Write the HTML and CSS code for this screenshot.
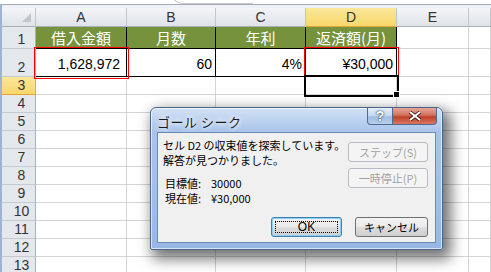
FILE: index.html
```html
<!DOCTYPE html>
<html lang="ja">
<head>
    <meta charset="UTF-8">
    <title>ゴール シーク</title>
    <link rel="stylesheet" href="styles.css">
</head>
<body>

<div class="topbar"><div class="formula-tab"></div></div>

<!-- シート -->
<div class="sheet">
    <div class="h corner"></div>
    <div class="h">A</div>
    <div class="h">B</div>
    <div class="h">C</div>
    <div class="h sel">D</div>
    <div class="h">E</div>
    <div class="h"></div>

    <div class="rh">1</div>
    <div class="c title">借入金額</div>
    <div class="c title">月数</div>
    <div class="c title">年利</div>
    <div class="c title">返済額(月)</div>
    <div class="c"></div>
    <div class="c"></div>

    <div class="rh">2</div>
    <div class="c val red a2">1,628,972</div>
    <div class="c val">60</div>
    <div class="c val">4%</div>
    <div class="c val red">¥30,000</div>
    <div class="c"></div>
    <div class="c"></div>

    <div class="rh sel">3</div>
    <div class="c"></div>
    <div class="c"></div>
    <div class="c"></div>
    <div class="c active"></div>
    <div class="c"></div>
    <div class="c"></div>

    <div class="rh">4</div><div class="c"></div><div class="c"></div><div class="c"></div><div class="c"></div><div class="c"></div><div class="c"></div>
    <div class="rh">5</div><div class="c"></div><div class="c"></div><div class="c"></div><div class="c"></div><div class="c"></div><div class="c"></div>
    <div class="rh">6</div><div class="c"></div><div class="c"></div><div class="c"></div><div class="c"></div><div class="c"></div><div class="c"></div>
    <div class="rh">7</div><div class="c"></div><div class="c"></div><div class="c"></div><div class="c"></div><div class="c"></div><div class="c"></div>
    <div class="rh">8</div><div class="c"></div><div class="c"></div><div class="c"></div><div class="c"></div><div class="c"></div><div class="c"></div>
    <div class="rh">9</div><div class="c"></div><div class="c"></div><div class="c"></div><div class="c"></div><div class="c"></div><div class="c"></div>
    <div class="rh">10</div><div class="c"></div><div class="c"></div><div class="c"></div><div class="c"></div><div class="c"></div><div class="c"></div>
    <div class="rh">11</div><div class="c"></div><div class="c"></div><div class="c"></div><div class="c"></div><div class="c"></div><div class="c"></div>
    <div class="rh">12</div><div class="c"></div><div class="c"></div><div class="c"></div><div class="c"></div><div class="c"></div><div class="c"></div>
    <div class="rh">13</div><div class="c"></div><div class="c"></div><div class="c"></div><div class="c"></div><div class="c"></div><div class="c"></div>
</div>

<!-- ダイアログ -->
<div class="dialog">
    <div class="titlebar">
        <span class="title-text">ゴール シーク</span>
        <div class="caption-btns">
            <div class="cap help">?</div>
            <div class="cap close">
                <svg width="14" height="10" viewBox="0 0 14 10"><path d="M2 1 L12 9 M12 1 L2 9" stroke="#3a1a14" stroke-width="3.6"/><path d="M2 1 L12 9 M12 1 L2 9" stroke="#fff" stroke-width="2"/></svg>
            </div>
        </div>
    </div>
    <div class="client">
        <div class="client-top">
            <div class="msg">
                <p>セル D2 の収束値を探索しています。</p>
                <p>解答が見つかりました。</p>
                <div class="result">
                    <p><span class="lbl">目標値:</span>30000</p>
                    <p><span class="lbl">現在値:</span>¥30,000</p>
                </div>
            </div>
            <div class="side-btns">
                <div class="btn disabled">ステップ(S)</div>
                <div class="btn disabled">一時停止(P)</div>
            </div>
        </div>
        <div class="actions">
            <div class="btn ok"><span>OK</span></div>
            <div class="btn cancel">キャンセル</div>
        </div>
    </div>
</div>

</body>
</html>
```

FILE: styles.css
```css
body {
    margin: 0;
    width: 491px;
    height: 272px;
    overflow: hidden;
    position: relative;
    background: #fff;
    font-family: "Liberation Sans", "Noto Sans CJK JP", sans-serif;
}

/* 数式バーの下 */
.topbar {
    height: 4px;
    border-bottom: 1px solid #a5acb5;
    background: #fff;
    position: relative;
}

.formula-tab {
    position: absolute;
    left: 172px;
    top: -8px;
    width: 80px;
    height: 11px;
    border: 1px solid #c5c9cf;
    border-radius: 0 0 0 10px;
    border-right: none;
    border-top: none;
}

.sheet {
    display: grid;
    grid-template-columns: 34px 91px 89px 90px 91px 72px 1fr;
    grid-template-rows: 19px 22px 28px 18px repeat(10, 18px);
    border-left: 2px solid #9fb3d6;
    padding-top: 3px;
    background: #eef1f5;
}

/* 見出し */
.h {
    background: linear-gradient(#f3f5f8, #dfe3e8);
    border-right: 1px solid #c1c6cd;
    border-bottom: 1px solid #a9b0b9;
    color: #333;
    font-size: 14px;
    display: flex;
    align-items: center;
    justify-content: center;
}

.corner {
    position: relative;
}

.corner::after {
    content: "";
    position: absolute;
    right: 4px;
    bottom: 4px;
    border-left: 9px solid transparent;
    border-bottom: 9px solid #c3c7cc;
}

.h.sel, .rh.sel {
    background: linear-gradient(#fbe79a, #f8d66b);
    border-bottom-color: #e2a53a;
}

.rh {
    background: #e4e8ed;
    border-right: 1px solid #a9b0b9;
    border-bottom: 1px solid #c5cad0;
    color: #333;
    font-size: 14px;
    display: flex;
    align-items: flex-end;
    justify-content: center;
    padding-bottom: 1px;
    padding-left: 6px;
}

/* セル */
.c {
    background: #fff;
    border-right: 1px solid #d4d4d4;
    border-bottom: 1px solid #d4d4d4;
    font-size: 14px;
    color: #000;
    display: flex;
    align-items: flex-end;
    justify-content: flex-end;
    padding: 0 3px 4px;
    position: relative;
}

.c.title {
    background: #76923c;
    color: #fff;
    font-family: "Noto Sans CJK JP", sans-serif;
    font-size: 15px;
    justify-content: center;
    align-items: center;
    padding: 0;
    border-right-color: #000;
    border-bottom-color: #000;
}

.c.val {
    border-right-color: #000;
    border-bottom-color: #000;
}

.c.a2 {
    padding-right: 6px;
}

.c.red {
    outline: 1px solid #f00;
    outline-offset: 1px;
    z-index: 2;
}

.c.active {
    outline: 2px solid #000;
    outline-offset: 0;
    z-index: 3;
}

.c.active::after {
    content: "";
    position: absolute;
    right: -4px;
    bottom: -4px;
    width: 5px;
    height: 5px;
    background: #000;
    border: 1px solid #fff;
}

/* ゴールシーク ダイアログ */
.dialog {
    position: absolute;
    left: 150px;
    top: 107px;
    width: 293px;
    height: 143px;
    box-sizing: border-box;
    border: 1px solid #4d6587;
    border-radius: 6px 6px 2px 2px;
    background: linear-gradient(#d2e1f5, #a9c4ea 24px, #a2bfe8 60%, #98b7e5);
    box-shadow: 5px 6px 14px 3px rgba(0, 0, 0, 0.55), inset 0 0 0 1px rgba(255, 255, 255, 0.6);
    display: flex;
    flex-direction: column;
    font-family: "Noto Sans CJK JP", sans-serif;
    font-size: 11px;
    z-index: 10;
}

.titlebar {
    height: 24px;
    display: flex;
    justify-content: space-between;
    align-items: flex-start;
}

.title-text {
    margin: 4px 0 0 6px;
    font-size: 13px;
    color: #1a1a1a;
    text-shadow: 0 0 4px #fff, 0 0 6px #fff;
    letter-spacing: 0.5px;
}

.caption-btns {
    display: flex;
    margin-right: 5px;
}

.cap {
    height: 17px;
    box-sizing: border-box;
    display: flex;
    align-items: center;
    justify-content: center;
    border: 1px solid #4e6a93;
    border-top: none;
}

.help {
    width: 26px;
    border-radius: 0 0 0 4px;
    background: linear-gradient(#e4eefa, #c3d6ef 50%, #9fbbe3 55%, #b9d0ee);
    color: #fff;
    font-family: "Liberation Sans", sans-serif;
    font-weight: bold;
    font-size: 14px;
    text-shadow: 0 0 2px #23374f, 0 0 1px #23374f;
}

.close {
    width: 44px;
    border-left: none;
    border-radius: 0 0 4px 0;
    background: linear-gradient(#e8a597, #d2705f 45%, #c03f27 55%, #d9775f);
}

.client {
    flex: 1;
    margin: 0 6px 6px;
    background: #f0f0f0;
    border: 1px solid #6d8ab5;
    padding: 5px 7px 5px 5px;
    display: flex;
    flex-direction: column;
}

.client-top {
    display: flex;
    justify-content: space-between;
}

.msg p {
    margin: 0;
    line-height: 15px;
    color: #000;
}

.result {
    margin-top: 8px;
    padding-left: 2px;
}

.lbl {
    display: inline-block;
    width: 46px;
}

.side-btns {
    display: flex;
    flex-direction: column;
    gap: 6px;
    margin-top: 4px;
}

.btn {
    box-sizing: border-box;
    height: 20px;
    border-radius: 3px;
    display: flex;
    align-items: center;
    justify-content: center;
    font-size: 11px;
}

.btn.disabled {
    width: 80px;
    border: 1px solid #b8bcc0;
    background: #f4f4f4;
    color: #a3a3a3;
}

.actions {
    margin-top: auto;
    display: flex;
    justify-content: flex-end;
    gap: 13px;
}

.ok, .cancel {
    background: linear-gradient(#f2f2f2, #ebebeb 48%, #dddddd 52%, #cfcfcf);
    color: #000;
}

.ok {
    width: 71px;
    border: 1px solid #3c7fb1;
    box-shadow: inset 0 0 0 1px #8ad1f7;
    position: relative;
    font-family: "Liberation Sans", sans-serif;
    font-size: 12px;
}

.ok::after {
    content: "";
    position: absolute;
    inset: 3px;
    border: 1px dotted #000;
}

.cancel {
    width: 73px;
    border: 1px solid #707070;
}
```
